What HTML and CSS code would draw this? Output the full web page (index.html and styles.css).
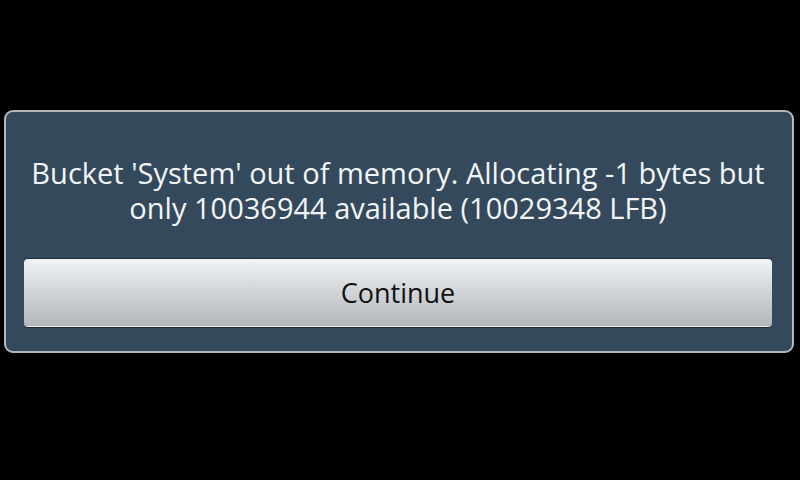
FILE: index.html
```html
<!DOCTYPE html>
<html lang="en">

<head>
    <meta charset="utf-8" />
    <title>Out of memory</title>

    <link rel="stylesheet" href="styles.css">
</head>

<body>
    <div class="dialog">
        <p class="message">Bucket 'System' out of memory. Allocating -1 bytes but<br>only 10036944 available (10029348 LFB)</p>
        <button class="btn">Continue</button>
    </div>
</body>

</html>
```

FILE: styles.css
```css
html {
    font-family: "Open Sans", "Noto Sans", sans-serif;
    background-color: #000;
}

body {
    margin: 0;
    padding-top: 110px;
}

.dialog {
    margin: 0 6px 0 4px;
    height: 243px;
    box-sizing: border-box;
    background-color: #34495c;
    border: 2px solid #b4b8bc;
    border-radius: 9px;
    padding: 43px 20px 0 18px;
    display: flex;
    flex-direction: column;
}

.message {
    margin: 0;
    color: #f2f5f5;
    font-size: 29px;
    line-height: 35px;
    text-align: center;
    white-space: nowrap;
}

.btn {
    margin-top: 34px;
    height: 67px;
    border: none;
    border-radius: 4px;
    background: linear-gradient(to bottom, #f1f3f5 0%, #d4d7da 45%, #b3b8bd 100%);
    box-shadow: 0 -1px 0 #1e2c38, 0 1px 0 #e8ecef, 0 2px 0 #1e2c38;
    color: #111;
    font-family: inherit;
    font-size: 27px;
    padding: 0;
}
```
